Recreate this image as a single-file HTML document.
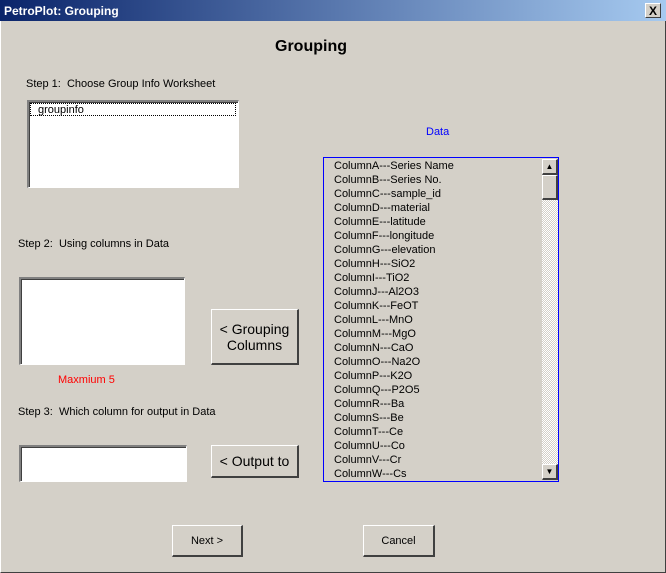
<!DOCTYPE html>
<html><head><style>
body{margin:0;width:666px;height:573px;overflow:hidden;background:#d4d0c8;font-family:"Liberation Sans",Arial,sans-serif;font-size:11px;color:#000;position:relative}
.a{position:absolute;white-space:nowrap}
.title{left:0;top:0;width:666px;height:21px;background:linear-gradient(90deg,#0a246a,#a6caf0);color:#fff;font-weight:bold;font-size:12px}
.sunk{background:#fff;border-top:2px solid #808080;border-left:2px solid #808080;border-right:1px solid #fff;border-bottom:1px solid #fff;box-sizing:border-box;box-shadow:inset 1px 1px 0 #404040}
.btn{border-top:1px solid #fff;border-left:1px solid #fff;border-right:2px solid #404040;border-bottom:2px solid #404040;box-sizing:border-box;text-align:center;font-size:14px;display:flex;align-items:center;justify-content:center;line-height:16px}
.row{position:absolute;left:10px;font-size:11px;white-space:nowrap}
</style></head><body>
<div class="a" style="left:0;top:0;width:666px;height:573px;box-sizing:border-box;border-left:1px solid #fff;border-top:1px solid #fff;border-right:1px solid #404040;border-bottom:1px solid #404040"></div>
<div class="a title"><span class="a" style="left:4px;top:4px">PetroPlot: Grouping</span>
<div class="a btn" style="left:645px;top:3px;width:16px;height:15px;background:#d4d0c8;color:#000;font-size:12px;font-weight:bold;border-right:1px solid #404040;border-bottom:1px solid #404040">X</div></div>
<div class="a" style="left:275px;top:38px;font-size:16px;font-weight:bold">Grouping</div>
<div class="a" style="left:26px;top:78px">Step 1:&nbsp; Choose Group Info Worksheet</div>
<div class="a sunk" style="left:27px;top:100px;width:212px;height:88px"><div class="a" style="left:1px;top:1px;width:206px;height:13px;border:1px dotted #000;box-sizing:border-box"></div><span class="a" style="left:9px;top:2px">groupinfo</span></div>
<div class="a" style="left:426px;top:126px;color:#0000ff">Data</div>
<div class="a" style="left:18px;top:238px">Step 2:&nbsp; Using columns in Data</div>
<div class="a sunk" style="left:19px;top:277px;width:166px;height:88px"></div>
<div class="a btn" style="left:211px;top:309px;width:88px;height:56px">&lt; Grouping<br>Columns</div>
<div class="a" style="left:58px;top:374px;color:#ff0000">Maxmium 5</div>
<div class="a" style="left:18px;top:406px">Step 3:&nbsp; Which column for output in Data</div>
<div class="a sunk" style="left:19px;top:445px;width:168px;height:37px"></div>
<div class="a btn" style="left:211px;top:445px;width:88px;height:33px">&lt; Output to</div>
<div class="a" style="left:323px;top:157px;width:236px;height:325px;border:1px solid #0000ff;box-sizing:border-box;overflow:hidden">
<div style="position:absolute;left:0;top:1px">
<div class="row" style="top:1px">ColumnA---Series Name</div><div class="row" style="top:15px">ColumnB---Series No.</div><div class="row" style="top:29px">ColumnC---sample_id</div><div class="row" style="top:43px">ColumnD---material</div><div class="row" style="top:57px">ColumnE---latitude</div><div class="row" style="top:71px">ColumnF---longitude</div><div class="row" style="top:85px">ColumnG---elevation</div><div class="row" style="top:99px">ColumnH---SiO2</div><div class="row" style="top:113px">ColumnI---TiO2</div><div class="row" style="top:127px">ColumnJ---Al2O3</div><div class="row" style="top:141px">ColumnK---FeOT</div><div class="row" style="top:155px">ColumnL---MnO</div><div class="row" style="top:169px">ColumnM---MgO</div><div class="row" style="top:183px">ColumnN---CaO</div><div class="row" style="top:197px">ColumnO---Na2O</div><div class="row" style="top:211px">ColumnP---K2O</div><div class="row" style="top:225px">ColumnQ---P2O5</div><div class="row" style="top:239px">ColumnR---Ba</div><div class="row" style="top:253px">ColumnS---Be</div><div class="row" style="top:267px">ColumnT---Ce</div><div class="row" style="top:281px">ColumnU---Co</div><div class="row" style="top:295px">ColumnV---Cr</div><div class="row" style="top:309px">ColumnW---Cs</div>
</div>
<div class="a" style="left:218px;top:1px;width:16px;height:321px;background:repeating-conic-gradient(#fff 0 25%,#d4d0c8 0 50%) 0 0/2px 2px"></div>
<div class="a btn" style="left:218px;top:1px;width:16px;height:16px;background:#d4d0c8;font-size:8px">▲</div>
<div class="a btn" style="left:218px;top:17px;width:16px;height:25px;background:#d4d0c8"></div>
<div class="a btn" style="left:218px;top:306px;width:16px;height:16px;background:#d4d0c8;font-size:8px">▼</div>
</div>
<div class="a btn" style="left:172px;top:525px;width:71px;height:32px;font-size:11px">Next &gt;</div>
<div class="a btn" style="left:363px;top:525px;width:72px;height:32px;font-size:11px">Cancel</div>
</body></html>
